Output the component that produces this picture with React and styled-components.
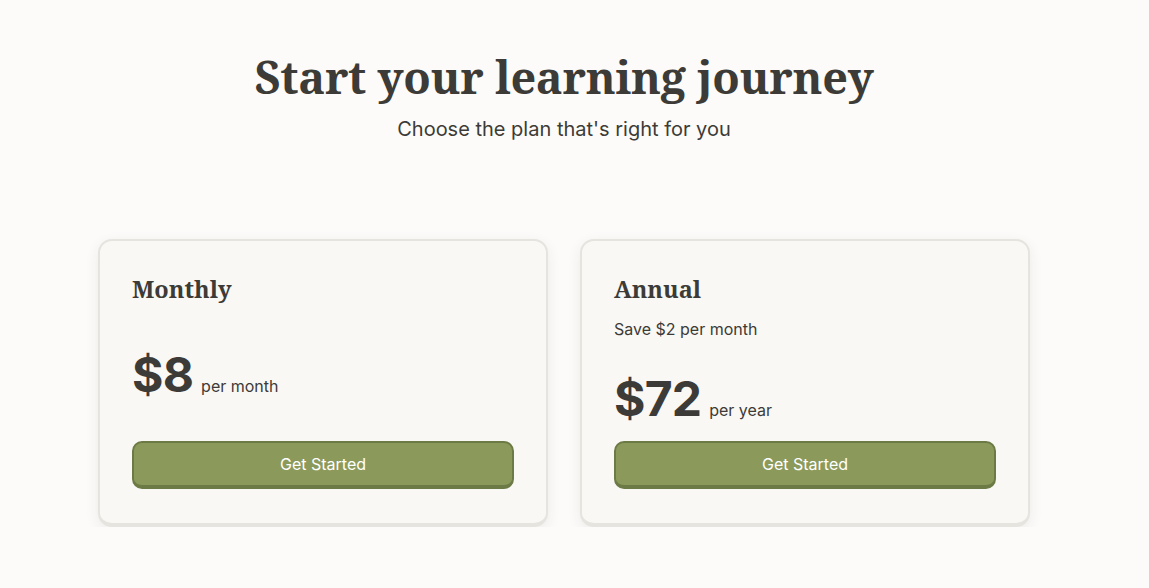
import React from 'react';
import styled, { createGlobalStyle } from 'styled-components';

const GlobalStyle = createGlobalStyle`
  html, body {
    margin: 0;
    padding: 0;
    background: #fcfbf9;
    color: #3d3b37;
    font-family: Inter, "Noto Sans", sans-serif;
  }
`;

const plans = [
  { id: 'monthly', name: 'Monthly', price: '$8', period: 'per month' },
  { id: 'annual', name: 'Annual', note: 'Save $2 per month', price: '$72', period: 'per year' },
];

export default function App() {
  return (
    <>
      <GlobalStyle />
      <Page>
        <Header>
          <Heading>Start your learning journey</Heading>
          <Lead>Choose the plan that's right for you</Lead>
        </Header>
        <Plans>
          {plans.map(plan => (
            <Card key={plan.id}>
              <PlanName>{plan.name}</PlanName>
              {plan.note && <Note>{plan.note}</Note>}
              <PriceRow>
                <Price>{plan.price}</Price>
                <Period>{plan.period}</Period>
              </PriceRow>
              <Button type="button">Get Started</Button>
            </Card>
          ))}
        </Plans>
      </Page>
    </>
  );
}

const Page = styled.main`
  width: 1128px;
  padding-top: 49px;
  box-sizing: border-box;
`;

const Header = styled.header`
  text-align: center;
`;

const Heading = styled.h1`
  margin: 0;
  font-family: "Noto Serif", "DejaVu Serif", serif;
  font-weight: 700;
  font-size: 45px;
  line-height: 56px;
  letter-spacing: -0.3px;
  color: #3d3b37;
`;

const Lead = styled.p`
  margin: 10px 0 0;
  font-size: 20px;
  line-height: 28px;
  color: #3d3b37;
`;

const Plans = styled.section`
  display: grid;
  grid-template-columns: 450px 450px;
  justify-content: center;
  gap: 32px;
  margin-top: 96px;
`;

const Card = styled.div`
  display: flex;
  flex-direction: column;
  padding: 32px 32px 34px;
  background: #f9f8f4;
  border: 2px solid #e6e4df;
  border-bottom-width: 4px;
  border-radius: 14px;
  box-shadow: 0 4px 14px rgba(60, 55, 45, 0.08);
  box-sizing: border-box;
`;

const PlanName = styled.h2`
  margin: 0 0 12px;
  font-family: "Noto Serif", "DejaVu Serif", serif;
  font-weight: 700;
  font-size: 23.5px;
  line-height: 32px;
  color: #3d3b37;
`;

const Note = styled.p`
  margin: 0;
  font-size: 16px;
  line-height: 24px;
  color: #3d3b37;
`;

const PriceRow = styled.div`
  display: flex;
  align-items: baseline;
  gap: 8px;
  margin: 34px 0 18px;
`;

const Price = styled.span`
  font-size: 48px;
  line-height: 48px;
  font-weight: 700;
  letter-spacing: -0.8px;
  color: #3d3b37;
`;

const Period = styled.span`
  font-size: 16px;
  color: #3d3b37;
`;

const Button = styled.button`
  margin-top: auto;
  width: 100%;
  padding: 11px 16px;
  font-family: Inter, "Noto Sans", sans-serif;
  font-size: 16px;
  line-height: 20px;
  color: #ffffff;
  background: #8b9a5b;
  border: 2px solid #6c7a45;
  border-bottom-width: 4px;
  border-radius: 10px;
  cursor: pointer;
`;
